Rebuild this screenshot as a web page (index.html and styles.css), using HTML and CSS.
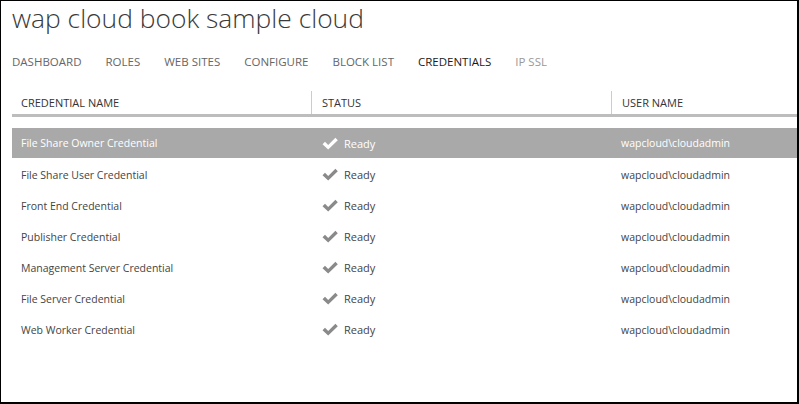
FILE: index.html
```html
<!DOCTYPE html>
<html>
<head>
<meta charset="utf-8">
<link rel="stylesheet" href="styles.css">
</head>
<body>
<div class="frame">
  <h1 class="title">wap cloud book sample cloud</h1>
  <nav class="tabs">
    <span class="tab">DASHBOARD</span>
    <span class="tab">ROLES</span>
    <span class="tab">WEB SITES</span>
    <span class="tab">CONFIGURE</span>
    <span class="tab">BLOCK LIST</span>
    <span class="tab active">CREDENTIALS</span>
    <span class="tab dim">IP SSL</span>
  </nav>
  <div class="grid">
    <div class="head">
      <div class="hcell">CREDENTIAL NAME</div>
      <div class="hcell sep">STATUS</div>
      <div class="hcell sep">USER NAME</div>
    </div>
    <div class="rows">
      <div class="row selected">
        <div class="cell name">File Share Owner Credential</div>
        <div class="cell status"><svg class="chk" viewBox="0 0 16 13"><path d="M0.5 7.2 L3 4.8 L6.2 8 L13.4 0.8 L15.8 3.2 L6.2 12.6 Z"/></svg>Ready</div>
        <div class="cell user">wapcloud\cloudadmin</div>
      </div>
      <div class="row">
        <div class="cell name">File Share User Credential</div>
        <div class="cell status"><svg class="chk" viewBox="0 0 16 13"><path d="M0.5 7.2 L3 4.8 L6.2 8 L13.4 0.8 L15.8 3.2 L6.2 12.6 Z"/></svg>Ready</div>
        <div class="cell user">wapcloud\cloudadmin</div>
      </div>
      <div class="row">
        <div class="cell name">Front End Credential</div>
        <div class="cell status"><svg class="chk" viewBox="0 0 16 13"><path d="M0.5 7.2 L3 4.8 L6.2 8 L13.4 0.8 L15.8 3.2 L6.2 12.6 Z"/></svg>Ready</div>
        <div class="cell user">wapcloud\cloudadmin</div>
      </div>
      <div class="row">
        <div class="cell name">Publisher Credential</div>
        <div class="cell status"><svg class="chk" viewBox="0 0 16 13"><path d="M0.5 7.2 L3 4.8 L6.2 8 L13.4 0.8 L15.8 3.2 L6.2 12.6 Z"/></svg>Ready</div>
        <div class="cell user">wapcloud\cloudadmin</div>
      </div>
      <div class="row">
        <div class="cell name">Management Server Credential</div>
        <div class="cell status"><svg class="chk" viewBox="0 0 16 13"><path d="M0.5 7.2 L3 4.8 L6.2 8 L13.4 0.8 L15.8 3.2 L6.2 12.6 Z"/></svg>Ready</div>
        <div class="cell user">wapcloud\cloudadmin</div>
      </div>
      <div class="row">
        <div class="cell name">File Server Credential</div>
        <div class="cell status"><svg class="chk" viewBox="0 0 16 13"><path d="M0.5 7.2 L3 4.8 L6.2 8 L13.4 0.8 L15.8 3.2 L6.2 12.6 Z"/></svg>Ready</div>
        <div class="cell user">wapcloud\cloudadmin</div>
      </div>
      <div class="row">
        <div class="cell name">Web Worker Credential</div>
        <div class="cell status"><svg class="chk" viewBox="0 0 16 13"><path d="M0.5 7.2 L3 4.8 L6.2 8 L13.4 0.8 L15.8 3.2 L6.2 12.6 Z"/></svg>Ready</div>
        <div class="cell user">wapcloud\cloudadmin</div>
      </div>
    </div>
  </div>
</div>
</body>
</html>
```

FILE: styles.css
```css
* { box-sizing: border-box; }
html, body { margin: 0; padding: 0; background: #fff; }
body { font-family: "Open Sans", "Liberation Sans", sans-serif; }
.frame {
  width: 799px;
  height: 404px;
  border-top: 1px solid #000;
  border-left: 1px solid #000;
  border-right: 2px solid #000;
  border-bottom: 2px solid #000;
  padding: 0 0 0 11px;
  overflow: hidden;
}
.title {
  margin: 0;
  padding: 1px 0 0 0;
  font-weight: 300;
  font-size: 26.4px;
  line-height: 32px;
  color: #3a3a3a;
}
.tabs {
  display: flex;
  gap: 24px;
  margin-top: 17px;
  height: 20px;
  align-items: center;
}
.tab {
  font-size: 11.5px;
  color: #666;
}
.tab.active { color: #1a1a1a; }
.tab.dim { color: #999; }
.grid { margin-top: 18px; }
.head {
  display: grid;
  grid-template-columns: 299px 300px 1fr;
  height: 28px;
  border-bottom: 3px solid #bdbdbd;
}
.hcell {
  font-size: 11px;
  color: #333;
  padding-left: 9px;
  display: flex;
  align-items: center;
  height: 23px;
  margin-top: 2px;
}
.hcell.sep { border-left: 1px solid #ccc; padding-left: 10px; }
.rows { padding-top: 11px; }
.row {
  display: grid;
  grid-template-columns: 299px 300px 1fr;
  height: 31px;
  align-items: center;
  font-size: 10.5px;
  color: #444;
}
.row.selected {
  background: #a9a9a9;
  color: #fff;
  height: 30px;
  margin-bottom: 1px;
}
.cell.name { padding-left: 9px; }
.cell.status { padding-left: 11px; display: flex; align-items: center; font-size: 11px; }
.cell.user { padding-left: 10px; }
.chk { width: 16px; height: 13px; fill: #8a8a8a; margin-right: 6px; }
.selected .chk { fill: #fff; }
```
